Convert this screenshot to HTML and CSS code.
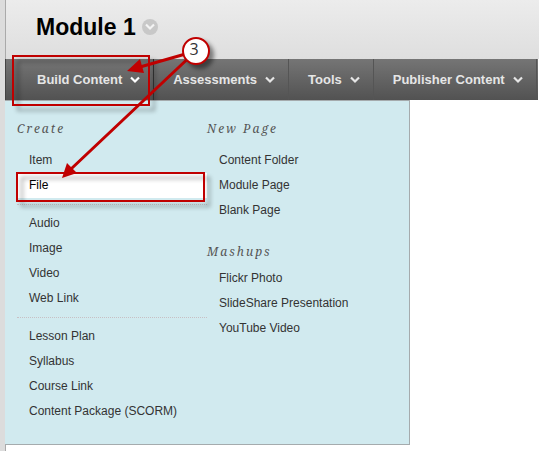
FILE: index.html
```html
<!DOCTYPE html>
<html lang="en">
<head>
<meta charset="utf-8">
<title>Module 1</title>
<link rel="stylesheet" href="styles.css">
</head>
<body>
<svg class="symbols" aria-hidden="true">
  <symbol id="chevron" viewBox="0 0 10 8"><path d="M1 1.5 5 5.5 9 1.5" fill="none" stroke="currentColor" stroke-width="2.2"/></symbol>
</svg>
<div class="page">
  <header class="header">
    <h1 class="title">Module 1</h1>
    <button class="title-menu" type="button" aria-label="Module options"><svg class="chevron"><use href="#chevron"/></svg></button>
  </header>
  <nav class="bar">
    <button class="tab tab-open" type="button">Build Content<svg class="chevron"><use href="#chevron"/></svg></button>
    <button class="tab" type="button">Assessments<svg class="chevron"><use href="#chevron"/></svg></button>
    <button class="tab" type="button">Tools<svg class="chevron"><use href="#chevron"/></svg></button>
    <button class="tab" type="button">Publisher Content<svg class="chevron"><use href="#chevron"/></svg></button>
  </nav>
  <main class="content">
    <div class="menu">
      <section class="column">
        <h2 class="heading">Create</h2>
        <ul class="list">
          <li><a class="item" href="#">Item</a></li>
          <li><a class="item item-active" href="#">File</a></li>
        </ul>
        <ul class="list list-divided">
          <li><a class="item" href="#">Audio</a></li>
          <li><a class="item" href="#">Image</a></li>
          <li><a class="item" href="#">Video</a></li>
          <li><a class="item" href="#">Web Link</a></li>
        </ul>
        <ul class="list list-divided">
          <li><a class="item" href="#">Lesson Plan</a></li>
          <li><a class="item" href="#">Syllabus</a></li>
          <li><a class="item" href="#">Course Link</a></li>
          <li><a class="item" href="#">Content Package (SCORM)</a></li>
        </ul>
      </section>
      <section class="column">
        <h2 class="heading">New Page</h2>
        <ul class="list">
          <li><a class="item" href="#">Content Folder</a></li>
          <li><a class="item" href="#">Module Page</a></li>
          <li><a class="item" href="#">Blank Page</a></li>
        </ul>
        <h2 class="heading heading-next">Mashups</h2>
        <ul class="list">
          <li><a class="item" href="#">Flickr Photo</a></li>
          <li><a class="item" href="#">SlideShare Presentation</a></li>
          <li><a class="item" href="#">YouTube Video</a></li>
        </ul>
      </section>
    </div>
  </main>
</div>
<svg class="callouts" width="220" height="220" viewBox="0 0 220 220">
  <g class="outline">
    <rect x="13" y="56" width="136" height="49"/>
    <rect x="17" y="173" width="187" height="28"/>
  </g>
  <g class="arrows">
    <path class="shaft" d="M196 51 140 67M196 51 71 169"/>
    <path class="head" d="M127 71 140 59 144 73zM62 178 67 163 77 173z"/>
  </g>
  <g class="badge">
    <circle cx="196" cy="51" r="13"/>
    <text x="194" y="55">3</text>
  </g>
</svg>
</body>
</html>
```

FILE: styles.css
```css
* {
  box-sizing: border-box;
}

body {
  margin: 0;
  background: #fff;
  font-family: "Liberation Sans", Arial, sans-serif;
}

.symbols {
  display: none;
}

.page {
  display: flex;
  flex-direction: column;
  min-height: 100vh;
  border-left: 5px solid #dcdcdc;
}

.header {
  display: flex;
  align-items: center;
  gap: 6px;
  height: 59px;
  padding: 0 30px;
  padding-bottom: 5px;
  border-left: 1px solid #aaa;
  background: linear-gradient(#ececec, #dedede);
}

.title {
  margin: 0;
  font-size: 23px;
  line-height: 28px;
  color: #000;
}

.title-menu {
  display: flex;
  align-items: center;
  justify-content: center;
  width: 16px;
  height: 16px;
  padding: 0;
  border: 0;
  border-radius: 50%;
  background: #c8c8c8;
  color: #f4f4f4;
}

.chevron {
  flex: none;
  width: 10px;
  height: 8px;
}

.bar {
  display: flex;
  height: 41px;
  margin-right: 1px;
  border-left: 1px solid #444;
  background: linear-gradient(#757575, #525252);
}

.tab {
  display: flex;
  align-items: center;
  gap: 8px;
  padding: 0 13px 0 19px;
  border: 0;
  border-right: 1px solid #555;
  background: none;
  color: #e6e6e6;
  font: bold 13px/16px "Liberation Sans", Arial, sans-serif;
  white-space: nowrap;
}

.tab:first-child {
  padding-left: 31px;
}

.tab-open {
  border-right-color: #333;
}

.tab-open .chevron {
  color: #fff;
}

.content {
  flex: 1;
  border-left: 1px solid #aaa;
}

.menu {
  display: flex;
  width: fit-content;
  margin-left: -1px;
  padding: 16px 12px 20px;
  border: 1px solid #a5abad;
  border-left: 0;
  background: #d1eaef;
}

.column {
  width: 190px;
}

.heading {
  margin: 0 0 7px;
  color: #555;
  font: italic 12px/24px "Noto Serif", "DejaVu Serif", Georgia, serif;
  letter-spacing: 2px;
}

.heading-next {
  margin: 17px 0 2px;
}

.list {
  margin: 0;
  padding: 0;
  list-style: none;
}

.list-divided {
  margin-top: 6px;
  padding-top: 6px;
  border-top: 1px dotted #c8c0c4;
}

.item {
  display: block;
  padding-left: 12px;
  color: #333;
  font-size: 12px;
  line-height: 25px;
  text-decoration: none;
}

.item-active {
  background: #fff;
  color: #000;
}

.callouts {
  position: absolute;
  top: 0;
  left: 0;
  pointer-events: none;
}

.outline {
  fill: none;
  stroke: #c00000;
  stroke-width: 2;
  filter: drop-shadow(5px 5px 2px rgba(0, 0, 0, 0.35));
}

.shaft {
  stroke: #c00000;
  stroke-width: 3;
}

.head {
  fill: #c00000;
}

.badge circle {
  fill: #fff;
  stroke: #c00000;
  stroke-width: 2;
  filter: drop-shadow(4px 4px 2px rgba(0, 0, 0, 0.45));
}

.badge text {
  fill: #333;
  font: 16px "Open Sans", sans-serif;
  text-anchor: middle;
}
```
